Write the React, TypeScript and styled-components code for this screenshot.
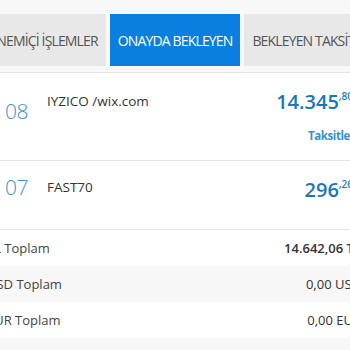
import React from 'react';
import styled, { createGlobalStyle } from 'styled-components';

const GlobalStyle = createGlobalStyle`
  html, body {
    margin: 0;
    padding: 0;
    background: #ffffff;
    overflow: hidden;
  }

  body {
    font-family: 'Open Sans', 'Liberation Sans', sans-serif;
    color: #444;
  }
`;

type Transaction = {
  day: string;
  label: string;
  whole: string;
  cents: string;
  action?: string;
  dayOffset: number;
  labelOffset: number;
};

type Total = {
  label: string;
  value: string;
  strong?: boolean;
};

const transactions: Array<Transaction> = [
  { day: '08', label: 'IYZICO /wix.com', whole: '14.345', cents: ',80', action: 'Taksitle', dayOffset: 10, labelOffset: 3 },
  { day: '07', label: 'FAST70', whole: '296', cents: ',26', dayOffset: -2, labelOffset: 1 },
];

const totals: Array<Total> = [
  { label: 'TL Toplam', value: '14.642,06 TL', strong: true },
  { label: 'USD Toplam', value: '0,00 USD' },
  { label: 'EUR Toplam', value: '0,00 EUR' },
  { label: '', value: '' },
];

const tabs = ['DÖNEMİÇİ İŞLEMLER', 'ONAYDA BEKLEYEN', 'BEKLEYEN TAKSİTLER'];

const Page = styled.div`
  width: 392px;
  margin-left: -27px;
`;

const TabBar = styled.div`
  display: flex;
  gap: 4px;
  margin-left: -4px;
  padding: 14px 0 6px;
  background: #f8f8f8;
  border-bottom: 1px solid #e6e6e6;
  white-space: nowrap;
`;

const Tab = styled.div<{ active?: boolean }>`
  display: flex;
  align-items: center;
  height: 52px;
  padding: 0 8px;
  font-size: 14px;
  letter-spacing: -0.85px;
  background: ${({ active }) => (active ? '#0b7fe0' : '#e8e8e8')};
  color: ${({ active }) => (active ? '#ffffff' : '#555555')};
  flex-shrink: 0;
`;

const Row = styled.div`
  display: flex;
  align-items: flex-start;
  min-height: 69px;
  box-sizing: border-box;
  padding: 16px 12px 16px 32px;
  border-bottom: 1px solid #e6e6e6;
`;

const Day = styled.div<{ offset: number }>`
  width: 42px;
  margin-top: ${({ offset }) => offset}px;
  font-size: 21px;
  font-weight: 300;
  line-height: 1.2;
  letter-spacing: -0.5px;
  color: #3d93cc;
  flex-shrink: 0;
`;

const Label = styled.div<{ offset: number }>`
  flex: 1;
  margin-top: ${({ offset }) => offset}px;
  font-size: 13.5px;
  line-height: 1.4;
  color: #333;
`;

const AmountColumn = styled.div`
  display: flex;
  flex-direction: column;
  align-items: flex-end;
`;

const Amount = styled.div`
  font-size: 20px;
  font-weight: 600;
  line-height: 1.25;
  color: #1b78b6;

  sup {
    font-size: 10px;
    font-weight: 600;
    vertical-align: top;
    position: relative;
    top: 1px;
  }
`;

const Action = styled.div`
  margin: 14px 3px 0 0;
  font-size: 11.5px;
  font-weight: 700;
  line-height: 1.4;
  letter-spacing: -0.4px;
  color: #3a8fcb;
`;

const TotalRow = styled.div<{ striped?: boolean }>`
  display: flex;
  align-items: center;
  justify-content: space-between;
  height: 36px;
  padding: 0 4px 0 14px;
  font-size: 13px;
  color: #444;
  background: ${({ striped }) => (striped ? '#f7f7f7' : '#ffffff')};
`;

const TotalValue = styled.span<{ strong?: boolean }>`
  font-weight: ${({ strong }) => (strong ? 600 : 400)};
  color: #333;
`;

const App = () => (
  <>
    <GlobalStyle />
    <Page>
      <TabBar>
        {tabs.map((tab, i) => (
          <Tab key={tab} active={i === 1}>{tab}</Tab>
        ))}
      </TabBar>
      {transactions.map((t) => (
        <Row key={t.day}>
          <Day offset={t.dayOffset}>{t.day}</Day>
          <Label offset={t.labelOffset}>{t.label}</Label>
          <AmountColumn>
            <Amount>
              {t.whole}
              <sup>{t.cents}</sup>
            </Amount>
            {t.action && <Action>{t.action}</Action>}
          </AmountColumn>
        </Row>
      ))}
      {totals.map((total, i) => (
        <TotalRow key={i} striped={i % 2 === 1}>
          <span>{total.label}</span>
          <TotalValue strong={total.strong}>{total.value}</TotalValue>
        </TotalRow>
      ))}
    </Page>
  </>
);

export default App;
